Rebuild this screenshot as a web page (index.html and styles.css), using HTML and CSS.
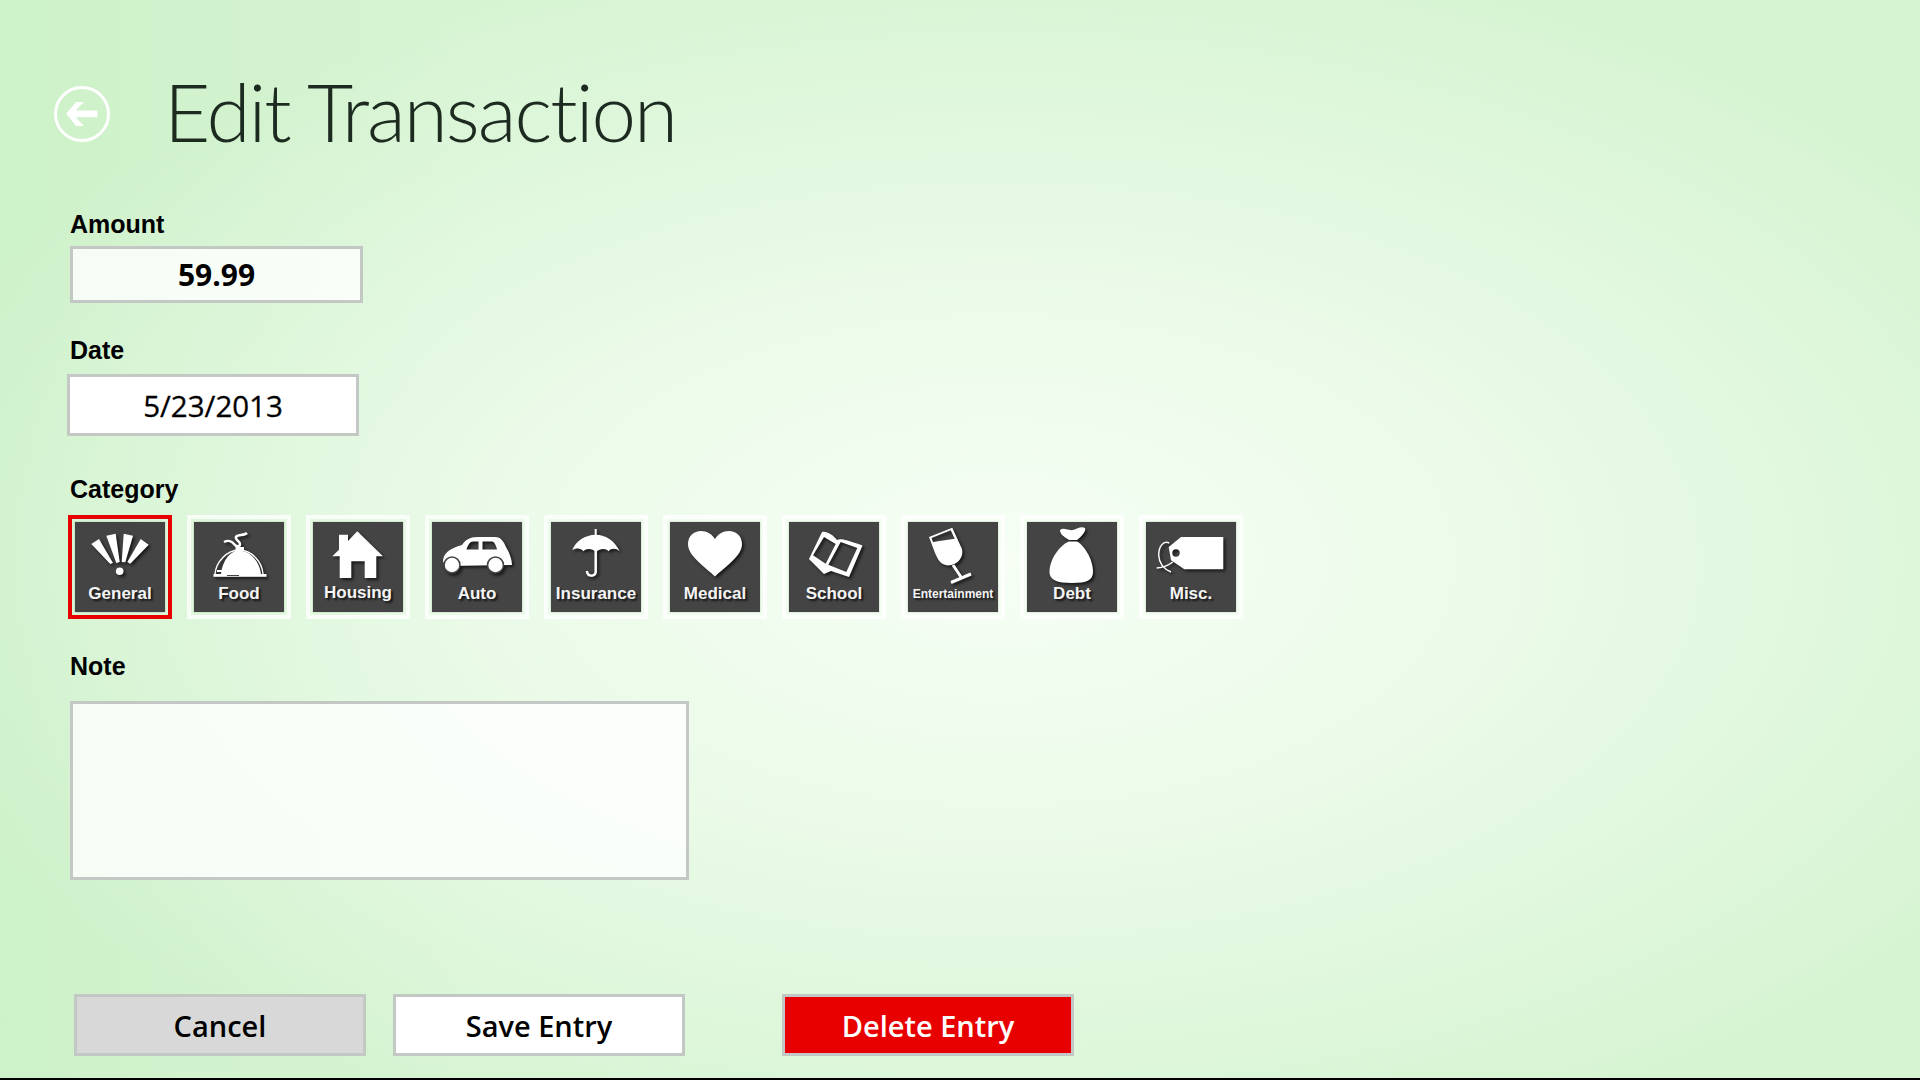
FILE: index.html
```html
<!DOCTYPE html>
<html lang="en">
<head>
    <meta charset="UTF-8">
    <title>Edit Transaction</title>
    <link rel="stylesheet" href="styles.css">
</head>
<body>
    <div class="page">
        <header class="header">
            <button class="back" type="button" aria-label="Back">
                <svg viewBox="0 0 32 24.300" width="32" height="24"><path d="M0 12 L10 0 L18 0 L9.500 8.500 L31.700 8.500 L31.700 15.500 L9.500 15.500 L18 24.300 L10 24.300 Z" fill="#fff"/></svg>
            </button>
            <h1>Edit Transaction</h1>
        </header>

        <div class="field field-amount">
            <label class="field-label">Amount</label>
            <div class="input input-amount">59.99</div>
        </div>

        <div class="field field-date">
            <label class="field-label">Date</label>
            <div class="input input-date">5/23/2013</div>
        </div>

        <div class="field field-category">
            <label class="field-label">Category</label>
            <div class="tiles">
                <div class="tile selected">
                    <div class="tile-face">
                        <svg class="icon" viewBox="0 0 90 62">
                            <polygon points="16.3,22 24,17 38,41 35.3,42"/>
                            <polygon points="31.3,13.7 40.7,11.7 44.7,40 41.3,41"/>
                            <polygon points="48.7,11.7 58,13.7 50.3,40.3 46.7,40"/>
                            <polygon points="65.7,17 73.7,22.7 55.3,41.7 52.3,40"/>
                            <circle cx="44.7" cy="49.3" r="3.8"/>
                        </svg>
                        <span class="tile-label">General</span>
                    </div>
                </div>
                <div class="tile">
                    <div class="tile-face">
                        <svg class="icon" viewBox="0 0 90 62">
                            <path d="M30 20 C34 18 38 19 40 22 C42 25 46 25 46 22 C46 19 41 18 42 15 C43 12 50 14 53 11" class="line thick"/>
                            <rect x="41.500" y="25" width="8.500" height="4"/>
                            <path d="M21 52 C22 40 33 28 45 28 C58 28 68 40 69 52" class="line hair"/>
                            <path d="M27 52 C28 41 35 28.500 45 28.500 C57 28.500 66 41 67 52 Z"/>
                            <rect x="23" y="48" width="7" height="2"/>
                            <rect x="19.500" y="52" width="53" height="2.800"/>
                            <rect x="33" y="53" width="12" height="1" class="cut"/>
                        </svg>
                        <span class="tile-label">Food</span>
                    </div>
                </div>
                <div class="tile">
                    <div class="tile-face">
                        <svg class="icon" viewBox="0 0 90 62">
                            <path d="M44.300 9.300 L70 34.300 L63.300 34.300 L63.300 56 L51.700 56 L51.700 39.300 L38.300 39.300 L38.300 56 L26.700 56 L26.700 34.300 L19.300 34.300 L26 27.800 L26 12.700 L35 12.700 L35 19 Z"/>
                        </svg>
                        <span class="tile-label label-raised">Housing</span>
                    </div>
                </div>
                <div class="tile">
                    <div class="tile-face">
                        <svg class="icon" viewBox="0 0 90 62">
                            <path fill-rule="evenodd" d="M11 40 C11 32 16 27 30 23 C33 18 38 15 45 15 L63 15 C69 15 72 20 74 25 C77 30 80 37 80 43 L15 44 Z M34.500 27.500 L46.500 27.500 L46.500 19.500 L41 19.500 C38 19.500 36 23 34.500 27.500 Z M50.500 19.500 L50.500 27.500 L65 27.500 C64 23 62 19.500 60 19.500 Z"/>
                            <circle cx="20" cy="43" r="8.700" class="cut"/>
                            <circle cx="63.500" cy="43" r="8.700" class="cut"/>
                            <circle cx="20" cy="43" r="7.200"/>
                            <circle cx="63.500" cy="43" r="7.200"/>
                        </svg>
                        <span class="tile-label">Auto</span>
                    </div>
                </div>
                <div class="tile">
                    <div class="tile-face">
                        <svg class="icon" viewBox="0 0 90 62">
                            <path d="M21.300 28 C25 19 34 12.700 44.700 12.700 C55 12.700 64 19 68.700 29.300 C65 26 60 26 57.500 29.300 C55 26 49 26 45 30 C41 26 35 26 32.500 29.300 C30 26 25 25.500 21.300 28 Z"/>
                            <path d="M44.700 7 L44.700 13" class="line"/>
                            <path d="M44.700 29 L44.700 50 C44.700 55 36 55 36 49" class="line thick"/>
                        </svg>
                        <span class="tile-label">Insurance</span>
                    </div>
                </div>
                <div class="tile">
                    <div class="tile-face">
                        <svg class="icon" viewBox="0 0 90 62">
                            <path d="M45 54.500 C34 44 18 34 18 22 C18 14 24 9 31 9 C37 9 42 12 45 17 C48 12 53 9 59 9 C66 9 72 14 72 22 C72 34 56 44 45 54.500 Z"/>
                        </svg>
                        <span class="tile-label">Medical</span>
                    </div>
                </div>
                <div class="tile">
                    <div class="tile-face">
                        <svg class="icon" viewBox="0 0 90 62">
                            <path fill-rule="evenodd" d="M33 10 C38 9 44 13 48 18 C52 16 60 19 73.500 23.500 L60 55 L42 49 L35 52 L20 37 Z M35 15 L24 33.300 L36.700 41.700 L46.700 22 Z M51.700 20 L39.300 42.700 L57.300 50 L68.300 26 Z"/>
                        </svg>
                        <span class="tile-label">School</span>
                    </div>
                </div>
                <div class="tile">
                    <div class="tile-face">
                        <svg class="icon" viewBox="0 0 90 62">
                            <path fill-rule="evenodd" d="M21 15 L44.300 5.700 L54 27 C56 35 50 43 40 43.500 C33 43 30 38 27 31 Z M23.500 16 L25 20 L46.700 16.700 L42.700 8.300 Z"/>
                            <path d="M45 43 L53 55" class="line wide"/>
                            <path d="M43 60.500 L63 52" class="line wide"/>
                        </svg>
                        <span class="tile-label label-small">Entertainment</span>
                    </div>
                </div>
                <div class="tile">
                    <div class="tile-face">
                        <svg class="icon" viewBox="0 0 90 62">
                            <path d="M33 8 C37 5 41 9 46 8 C50 7 54 4 58 6 C59 9 56 13 50 18 L42 18 C37 15 33 12 33 8 Z"/>
                            <path d="M42 19.500 C33 23 22.500 37 22.500 50 C22.500 58 30 61 45 61 C60 61 66 58 66 50 C66 37 57 23 50 19.500 Z"/>
                        </svg>
                        <span class="tile-label">Debt</span>
                    </div>
                </div>
                <div class="tile">
                    <div class="tile-face">
                        <svg class="icon" viewBox="0 0 90 62">
                            <path fill-rule="evenodd" d="M35 15 L77.300 15 L77.300 47.300 L38.300 47.300 L25 38.300 L22.700 25 Z M33.700 31 A3.700 3.700 0 1 0 26.300 31 A3.700 3.700 0 1 0 33.700 31 Z"/>
                            <path d="M23.300 21 C17 18 12.700 25 12.700 33 C13 41 18 47 25 50 M10.700 46 C17 45.500 23 43 26.700 40" class="line hair"/>
                        </svg>
                        <span class="tile-label">Misc.</span>
                    </div>
                </div>
            </div>
        </div>

        <div class="field field-note">
            <label class="field-label">Note</label>
            <div class="input input-note"></div>
        </div>

        <div class="actions">
            <button class="btn btn-cancel" type="button">Cancel</button>
            <button class="btn btn-save" type="button">Save Entry</button>
            <button class="btn btn-delete" type="button">Delete Entry</button>
        </div>
    </div>
</body>
</html>
```

FILE: styles.css
```css
* {
    box-sizing: border-box;
}
html, body {
    margin: 0;
    height: 100%;
    overflow: hidden;
}
body {
    font-family: "Liberation Sans", Arial, sans-serif;
    background-color: #d6f4d2;
    background-image:
        radial-gradient(ellipse 1150px 620px at 1000px 560px, rgba(248,255,247,0.95) 0%, rgba(248,255,247,0.6) 45%, rgba(248,255,247,0) 100%),
        linear-gradient(90deg, #cdf1c9 0%, #d6f4d2 25%, #d6f4d2 100%);
}
.page {
    height: 1080px;
    padding: 85px 0 0 70px;
    border-bottom: 2px solid #000;
}

/* header */
.header {
    display: flex;
    align-items: center;
    height: 57px;
}
.back {
    flex: none;
    width: 56px;
    height: 56px;
    margin-left: -16px;
    padding: 0;
    display: flex;
    align-items: center;
    justify-content: center;
    background: none;
    border: 3px solid #fff;
    border-radius: 50%;
}
h1 {
    margin: -4px 0 0 54px;
    font-family: Lato, sans-serif;
    font-size: 80px;
    font-weight: 300;
    line-height: 57px;
    letter-spacing: -2px;
    color: #1c2a20;
    white-space: nowrap;
}

/* fields */
.field-label {
    display: block;
    height: 30px;
    font-size: 25px;
    font-weight: bold;
    line-height: 30px;
    color: #000;
}
.input {
    display: flex;
    align-items: center;
    justify-content: center;
    border: 3px solid #c4c8c4;
    font-family: "Open Sans", sans-serif;
    color: #000;
}
.field-amount {
    margin-top: 67px;
}
.input-amount {
    width: 293px;
    height: 57px;
    margin-top: 7px;
    background: rgba(255,255,255,0.8);
    font-size: 30px;
    font-weight: 700;
}
.field-date {
    margin-top: 32px;
}
.input-date {
    width: 292px;
    height: 62px;
    margin: 9px 0 0 -3px;
    background: #fff;
    font-size: 29.5px;
    -webkit-text-stroke: 0.3px #000;
}
.field-category {
    margin-top: 38px;
}

/* category tiles */
.tiles {
    display: flex;
    gap: 15px;
    margin: 11px 0 0 -2px;
}
.tile {
    flex: none;
    width: 104px;
    height: 104px;
    padding: 3px;
    border: 4px solid rgba(255,255,255,0.75);
}
.tile.selected {
    padding: 3px;
    border: 4px solid #e60000;
}
.tile-face {
    height: 90px;
    display: flex;
    flex-direction: column;
    align-items: center;
    background: #444;
    box-shadow: 0 0 1px rgba(0,0,0,0.4);
}
.icon {
    width: 90px;
    height: 62px;
    fill: #fff;
    filter: drop-shadow(2px 2px 1.5px rgba(0,0,0,0.65));
}
.icon .line {
    fill: none;
    stroke: #fff;
    stroke-width: 2;
}
.icon .thick {
    stroke-width: 2.5;
}
.icon .wide {
    stroke-width: 3;
}
.icon .hair {
    stroke-width: 1.4;
}
.icon .cut {
    fill: #444;
}
.tile-label {
    font-size: 17px;
    font-weight: bold;
    line-height: 20px;
    color: #f4f4f4;
    text-shadow: 2px 2px 2px rgba(0,0,0,0.7);
    white-space: nowrap;
}
.label-raised {
    margin-top: -1px;
}
.label-small {
    font-size: 12px;
}

/* note */
.field-note {
    margin-top: 32px;
}
.input-note {
    width: 619px;
    height: 179px;
    margin-top: 20px;
    background: rgba(255,255,255,0.8);
}

/* buttons */
.actions {
    display: flex;
    margin: 114px 0 0 4px;
}
.btn {
    width: 292px;
    height: 62px;
    padding: 0;
    border: 3px solid #c4c8c4;
    font-family: "Open Sans", sans-serif;
    font-size: 29px;
    font-weight: 600;
    color: #000;
}
.btn-cancel {
    background: #d8d8d8;
}
.btn-save {
    margin-left: 27px;
    background: #fff;
}
.btn-delete {
    margin-left: 97px;
    background: #e80000;
    color: #fff;
}
```
